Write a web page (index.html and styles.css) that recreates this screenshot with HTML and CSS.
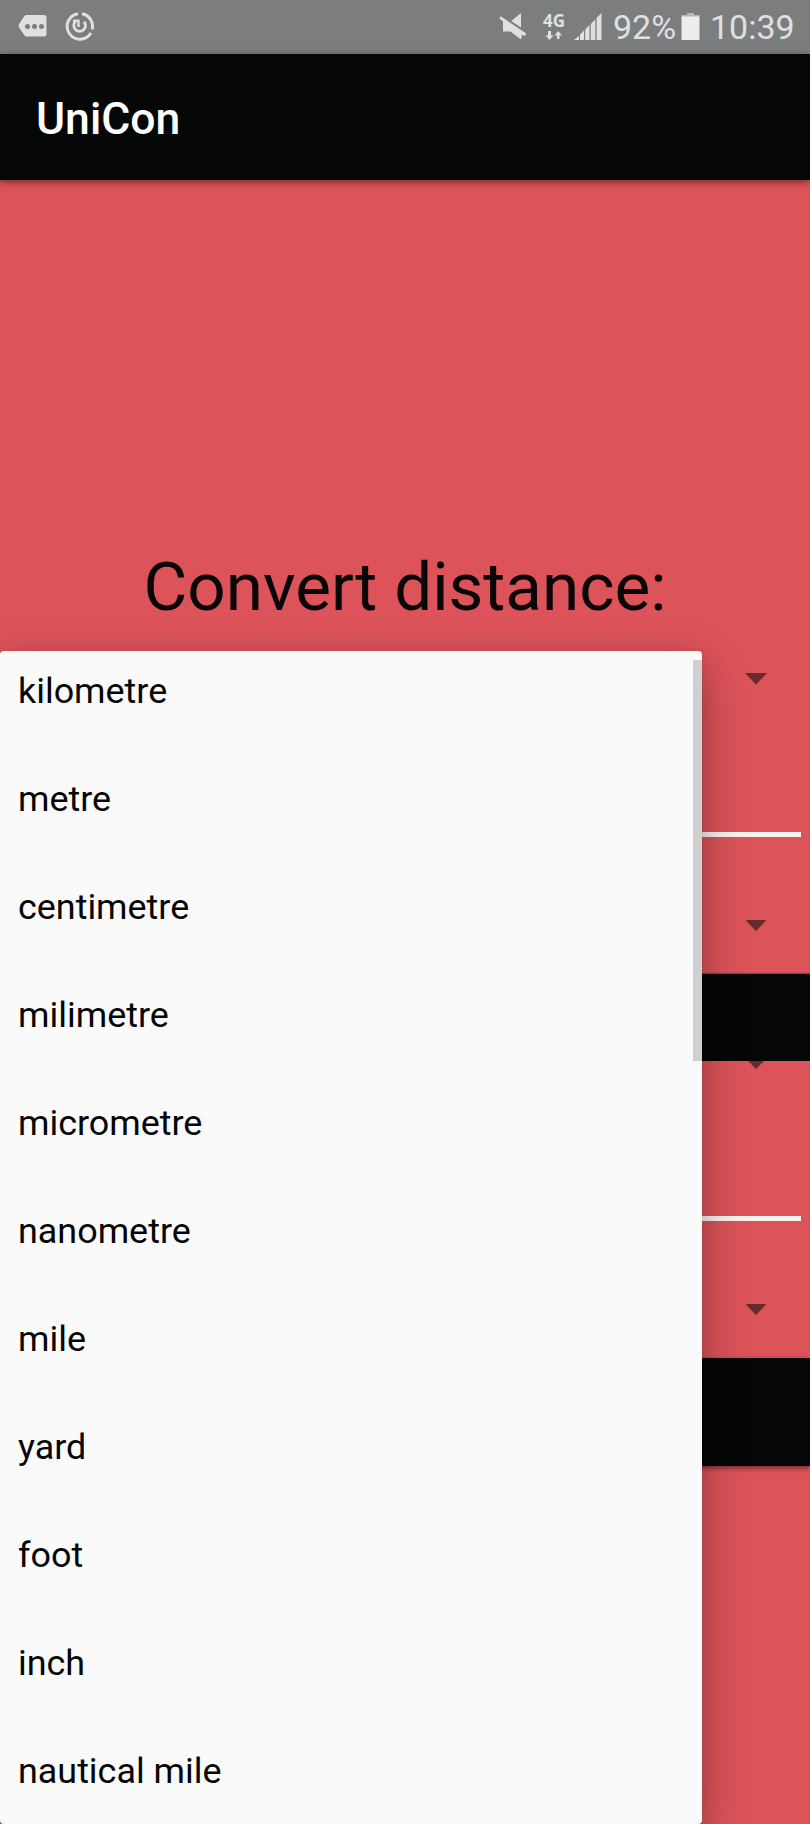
FILE: index.html
```html
<!DOCTYPE html>
<html lang="en">
<head>
<meta charset="utf-8">
<title>UniCon</title>
<link rel="stylesheet" href="styles.css">
</head>
<body>
<div class="screen">
  <header class="status">
    <svg class="icon-message" width="30" height="24" viewBox="0 0 30 24"><path fill="#dfe0e0" d="M8.500 1H26q2.500 0 2.500 2.500V20q0 2.500-2.500 2.500H8.500Q7.200 22.500 6.300 21.200L1 13.200Q.2 11.700 1 10.300L6.300 2.300Q7.200 1 8.500 1z"/><g fill="#7c7d7f"><circle cx="9.500" cy="12.500" r="2.500"/><circle cx="16.500" cy="12.500" r="2.500"/><circle cx="23.500" cy="12.500" r="2.500"/></g></svg>
    <svg class="icon-sync" width="30" height="30" viewBox="0 0 30 30" fill="none" stroke="#dfe0e0"><path stroke-width="3" d="M13 2.700A12.800 12.800 0 1 0 25.900 22M17 2.700A12.800 12.800 0 0 1 27.200 18.500"/><path stroke-width="3" d="M10.300 10.700A5.800 5.800 0 1 0 19 10.700"/><path stroke-width="2.400" d="M8 9.800H13.500V16"/></svg>
    <div class="status-right">
      <svg class="icon-mute" width="28" height="28" viewBox="0 0 28 28"><path fill="#dfe0e0" d="M22 0V14.500L12.200 8zM1.600 3.200L27.300 20.600 25.700 23.200 23.200 21.600 22 26.500 11.500 18.500H4V8.500L.3 5.500z"/></svg>
      <div class="network"><span>4G</span><svg width="18" height="9" viewBox="0 0 18 9" fill="#dfe0e0"><path d="M3 0H6V4.500H8.500L4.500 9 .5 4.500H3zM12 8V4.500H9.500L13.200 0 17 4.500H14.500V8z"/></svg></div>
      <svg class="icon-signal" width="28" height="28" viewBox="0 0 28 28" fill="#dfe0e0"><path d="M0 27L5 23V27zM6 27V21.500L10 17.500V27zM11.200 27V16.500L15.500 12V27zM16.800 27V11L21.300 6.500V27zM22.600 27V5L27.500 0V27z"/></svg>
      <span class="percent">92%</span>
      <svg class="icon-battery" width="19" height="28" viewBox="0 0 19 28"><path fill="#b5b6b6" d="M6 0H13V2H18.500V4H.5V2H6z"/><path fill="#ededed" d="M.5 3.500H18.500V27H.5z"/></svg>
      <span class="clock">10:39</span>
    </div>
  </header>
  <div class="app-bar"><h1>UniCon</h1></div>
  <main class="content">
    <h2>Convert distance:</h2>
    <section class="converter">
      <div class="select"><i class="arrow"></i></div>
      <div class="field"></div>
      <div class="select target"><i class="arrow"></i></div>
      <div class="button short"></div>
    </section>
    <section class="converter second">
      <div class="select clipped"><i class="arrow"></i></div>
      <div class="field"></div>
      <div class="select target"><i class="arrow"></i></div>
      <div class="button"></div>
    </section>
  </main>
  <div class="menu">
    <ul>
      <li>kilometre</li><li>metre</li><li>centimetre</li><li>milimetre</li><li>micrometre</li><li>nanometre</li><li>mile</li><li>yard</li><li>foot</li><li>inch</li><li>nautical mile</li>
    </ul>
    <div class="scrollbar"></div>
  </div>
</div>
</body>
</html>
```

FILE: styles.css
```css
* { box-sizing: border-box; }
body { margin: 0; font-family: Roboto, "Liberation Sans", sans-serif; }
.screen {
  position: relative;
  display: flex;
  flex-direction: column;
  width: 810px;
  height: 1824px;
  overflow: hidden;
  background: #dc5359;
}
svg { display: block; flex: none; }
.status {
  display: flex;
  align-items: flex-start;
  height: 54px;
  flex: none;
  background: #7c7d7f;
  color: #dfe0e0;
}
.icon-message { margin: 14px 0 0 18px; }
.icon-sync { margin: 11px 0 0 17px; }
.status-right { display: flex; margin-left: auto; padding-right: 15px; }
.icon-mute { margin: 13px 16px 0 0; }
.network {
  display: flex;
  flex-direction: column;
  width: 22px;
  margin: 12px 9px 0 0;
  font: 700 17px/17px "Open Sans", sans-serif;
}
.network svg { margin: 2px 0 0 2px; }
.icon-signal { margin: 13px 11px 0 0; }
.percent, .clock { font-size: 34px; line-height: 54px; white-space: nowrap; }
.percent { width: 61px; margin-right: 7px; }
.icon-battery { margin: 13px 10px 0 0; }
.clock { width: 85px; }
.app-bar {
  display: flex;
  align-items: center;
  flex: none;
  height: 126px;
  padding: 3px 0 0 36px;
  background: #050706;
  color: #fff;
  box-shadow: 0 2px 7px rgba(0, 0, 0, .5);
}
h1 { margin: 0; font-size: 44.500px; font-weight: 500; line-height: 56px; }
.content { flex: 1; padding-top: 367px; }
h2 {
  height: 99px;
  margin: 0;
  font-size: 67.400px;
  font-weight: 400;
  line-height: 80px;
  text-align: center;
  color: #080606;
}
.select {
  display: flex;
  justify-content: flex-end;
  height: 186px;
  padding: 27px 43px 0 0;
}
.arrow {
  width: 22px;
  height: 11.500px;
  background: #672a2d;
  clip-path: polygon(0 0, 100% 0, 50% 100%);
}
.field { height: 5px; margin: 0 9px; background: #f6f2f0; }
.select.target { height: 136.500px; padding-top: 82.500px; }
.button {
  height: 108px;
  background: #050706;
  box-shadow: 0 2px 5px rgba(0, 0, 0, .5);
}
.button.short { height: 87.500px; box-shadow: 0 -1px 1px rgba(0, 0, 0, .3); }
.second { position: relative; background: #dc5359; }
.select.clipped { height: 155px; padding: 0 43px 0 0; }
.clipped .arrow {
  width: 16px;
  height: 8px;
  margin-right: 3px;
}
.menu {
  position: absolute;
  left: 0;
  top: 651px;
  width: 702px;
  height: 1173px;
  border-radius: 4px;
  background: #fafafa;
  box-shadow: 0 16px 48px rgba(0, 0, 0, .3), 0 6px 14px rgba(0, 0, 0, .1);
}
ul { margin: 0; padding: 0 0 0 18px; list-style: none; }
li { height: 108px; font-size: 35.900px; line-height: 80px; color: #050505; }
.scrollbar {
  position: absolute;
  right: 0;
  top: 9px;
  width: 9px;
  height: 401px;
  background: #d0d0d0;
}
```
